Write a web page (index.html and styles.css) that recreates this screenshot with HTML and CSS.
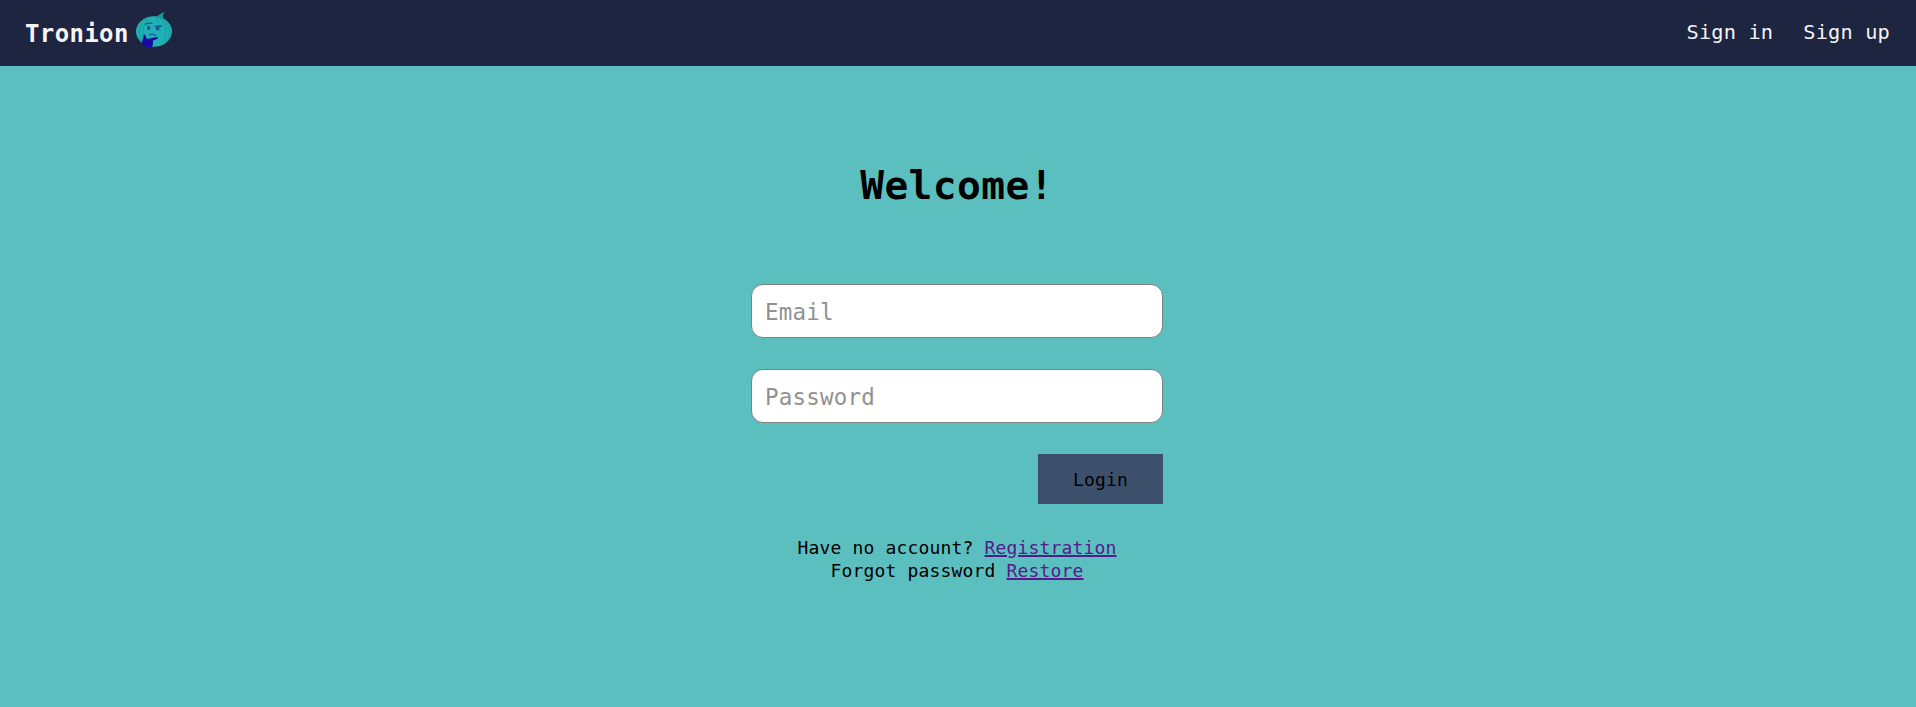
FILE: index.html
```html
<!DOCTYPE html>
<html lang="en">
<head>
<meta charset="utf-8">
<title>Tronion</title>
<link rel="stylesheet" href="styles.css">
</head>
<body>
<header class="header">
  <a class="brand" href="#"><span class="brand-name">Tronion</span>
    <svg class="logo" viewBox="0 0 38 38" aria-hidden="true">
      <ellipse cx="19" cy="20.5" rx="18" ry="15.3" fill="#20b2b2"/>
      <path d="M20 6C24 5 25 2 30 1C27.5 3 27.5 5 28.5 8C25 7 23 7 20 6Z" fill="#169797"/>
      <g fill="none" stroke="#189c9f" stroke-width="1">
        <path d="M12 7C4 11 2 24 8 32M16 6C9 10 6 20 9 28M24 7C33 13 33 26 26 34M28 8C38 17 36 27 29 33M21 7L24 12"/>
      </g>
      <path d="M10 13.3Q14 11.5 17.5 12.3M19.5 15.5L27 15" fill="none" stroke="#1c5898" stroke-width="1.3"/>
      <ellipse cx="13.7" cy="17" rx="1.6" ry="2.2" fill="#1c5898"/>
      <ellipse cx="22.7" cy="17.6" rx="2" ry="2" fill="#1c5898"/>
      <path d="M14 24Q18 22 21 25" fill="none" stroke="#1c5898" stroke-width="1.3"/>
      <path d="M9 23C11 24 11 27 12 28L22 26Q24 27 22 28L18 29.5V33C18 36 15 37 11 36C7 35 6 31 8 28Z" fill="#170aa0"/>
    </svg>
  </a>
  <nav class="nav"><a href="#">Sign in</a><a href="#">Sign up</a></nav>
</header>
<main class="main">
  <h1 class="title">Welcome!</h1>
  <form class="form">
    <input class="field" type="email" placeholder="Email">
    <input class="field" type="password" placeholder="Password">
    <button class="login" type="button">Login</button>
  </form>
  <div class="links">
    <div>Have no account? <a href="#">Registration</a></div>
    <div>Forgot password <a href="#">Restore</a></div>
  </div>
</main>
</body>
</html>
```
FILE: styles.css
```css
* { box-sizing: border-box; }
body {
  margin: 0;
  min-height: 100vh;
  background: #5cbfbf;
  color: #000;
  font: 18px/23px "DejaVu Sans Mono", monospace;
  letter-spacing: 0.163px;
}
.header {
  height: 66px;
  padding: 0 26px 0 25px;
  display: flex;
  justify-content: space-between;
  background: #1d2540;
}
.header a { color: #f4f4f4; text-decoration: none; }
.brand { display: flex; gap: 6px; }
.brand-name {
  margin-top: 18px;
  font-size: 24px;
  line-height: 32px;
  font-weight: bold;
  letter-spacing: 0.37px;
}
.logo { width: 38px; height: 38px; margin-top: 11px; }
.nav {
  display: flex;
  gap: 30px;
  padding-top: 18px;
  font-size: 20.3px;
  line-height: 28px;
  letter-spacing: 0.18px;
}
.main {
  width: 412px;
  margin: 0 auto;
  position: relative;
  right: 1px;
  padding-top: 93px;
}
.title {
  margin: 0 0 73px;
  text-align: center;
  font-size: 39.5px;
  line-height: 52px;
  letter-spacing: 0.42px;
}
.form { display: flex; flex-direction: column; gap: 31px; }
.field {
  width: 100%;
  height: 54px;
  padding: 1px 13px 0;
  border: 1px solid #808080;
  border-radius: 12px;
  background: #fff;
  color: #000;
  font: 22.5px "DejaVu Sans Mono", monospace;
  letter-spacing: 0.2px;
}
.field::placeholder { color: #919191; opacity: 1; }
.login {
  align-self: flex-end;
  width: 125px;
  height: 50px;
  padding: 0;
  border: 0;
  background: #3c506b;
  color: #000;
  font: inherit;
  letter-spacing: inherit;
}
.links { margin-top: 32px; text-align: center; }
.links a { color: #551a8b; text-decoration-thickness: 2px; }
```
